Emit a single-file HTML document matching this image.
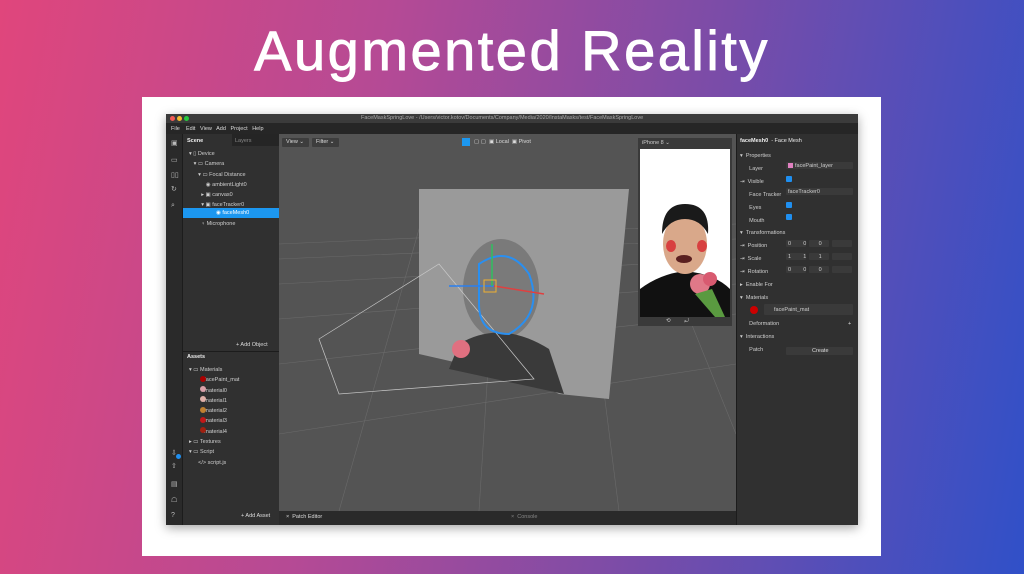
<!DOCTYPE html>
<html><head><meta charset="utf-8"><style>
*{margin:0;padding:0;box-sizing:border-box}
body{width:1024px;height:574px;overflow:hidden;position:relative;font-family:"Liberation Sans",sans-serif;
background:linear-gradient(100deg,#e0467c 0%,#b54a95 35%,#7a4ca8 65%,#4f4fbb 85%,#3050c8 100%);}
.ab{position:absolute}
h1{position:absolute;left:0;width:1024px;top:18px;text-align:center;color:#fff;font-weight:normal;font-size:56px;letter-spacing:2.5px;-webkit-text-stroke:0.9px #fff}
.t{position:absolute;font-size:5.5px;color:#cfcfcf;white-space:nowrap}
.in{position:absolute;height:7px;background:#3a3a3a;border-radius:1px}
.cb{position:absolute;width:6px;height:6px;background:#1f8ff0;border-radius:1px}
.ic{position:absolute;left:5px;font-size:7px;color:#bbb}
</style></head><body>
<h1>Augmented Reality</h1>
<div class="ab" style="left:142px;top:97px;width:739px;height:459px;background:#fff"></div>
<div class="ab" style="left:166px;top:114px;width:692px;height:411px;background:#2b2b2b;box-shadow:0 3px 10px rgba(0,0,0,.35);overflow:hidden">
 <div class="ab" style="left:0;top:0;width:692px;height:9px;background:#3b3b3b"></div>
 <div class="ab" style="left:4px;top:2px;width:5px;height:5px;border-radius:50%;background:#f25a55"></div>
 <div class="ab" style="left:11px;top:2px;width:5px;height:5px;border-radius:50%;background:#f4bb2f"></div>
 <div class="ab" style="left:18px;top:2px;width:5px;height:5px;border-radius:50%;background:#27c93f"></div>
 <div class="t" style="left:195px;top:1px;color:#aaa;font-size:5.5px">FaceMaskSpringLove - /Users/victor.kotov/Documents/Company/Media/2020/InstaMasks/test/FaceMaskSpringLove</div>
 <div class="ab" style="left:0;top:9px;width:692px;height:11px;background:#262626"></div>
 <div class="t" style="left:5px;top:12px;color:#ddd">File &nbsp;&nbsp; Edit &nbsp; View &nbsp; Add &nbsp; Project &nbsp; Help</div>
 <div class="ab" style="left:0;top:20px;width:17px;height:391px;background:#2a2a2a;border-right:1px solid #1c1c1c"></div>
 <div class="ic" style="top:25px">▣</div><div class="ic" style="top:42px">▭</div><div class="ic" style="top:57px">▯▯</div><div class="ic" style="top:71px">↻</div><div class="ic" style="top:88px">⌕</div>
 <div class="ic" style="top:335px">⇩</div><div class="ic" style="top:348px">⇧</div><div class="ic" style="top:366px">▤</div><div class="ic" style="top:382px">☖</div><div class="ic" style="top:398px">?</div>
 <div class="ab" style="left:10px;top:340px;width:5px;height:5px;border-radius:50%;background:#1f8ff0"></div>
 <div class="ab" style="left:17px;top:20px;width:96px;height:391px;background:#303030"></div>
 <div class="ab" style="left:66px;top:20px;width:48px;height:12px;background:#252525"></div>
 <div class="t" style="left:21px;top:24px;color:#eee;font-weight:bold">Scene</div>
 <div class="t" style="left:69px;top:24px;color:#888">Layers</div>
 <div class="t" style="left:23px;top:35px;line-height:10.3px">▾ ▯ Device<br>&nbsp;&nbsp;&nbsp;▾ ▭ Camera<br>&nbsp;&nbsp;&nbsp;&nbsp;&nbsp;&nbsp;▾ ▭ Focal Distance<br>&nbsp;&nbsp;&nbsp;&nbsp;&nbsp;&nbsp;&nbsp;&nbsp;&nbsp;&nbsp;&nbsp;◉ ambientLight0<br>&nbsp;&nbsp;&nbsp;&nbsp;&nbsp;&nbsp;&nbsp;&nbsp;▸ ▣ canvas0<br>&nbsp;&nbsp;&nbsp;&nbsp;&nbsp;&nbsp;&nbsp;&nbsp;▾ ▣ faceTracker0</div>
 <div class="ab" style="left:17px;top:94px;width:96px;height:10px;background:#1c97f0"></div>
 <div class="t" style="left:50px;top:96px;color:#fff">◉ faceMesh0</div>
 <div class="t" style="left:35px;top:107px">♀ Microphone</div>
 <div class="t" style="left:70px;top:228px;color:#ddd">+ Add Object</div>
 <div class="ab" style="left:17px;top:237px;width:96px;height:1px;background:#1c1c1c"></div>
 <div class="t" style="left:21px;top:240px;color:#eee;font-weight:bold">Assets</div>
 <div class="t" style="left:23px;top:251px;line-height:10.3px">▾ ▭ Materials<br>&nbsp;&nbsp;&nbsp;&nbsp;&nbsp;&nbsp;&nbsp;&nbsp;&nbsp;&nbsp;facePaint_mat<br>&nbsp;&nbsp;&nbsp;&nbsp;&nbsp;&nbsp;&nbsp;&nbsp;&nbsp;&nbsp;material0<br>&nbsp;&nbsp;&nbsp;&nbsp;&nbsp;&nbsp;&nbsp;&nbsp;&nbsp;&nbsp;material1<br>&nbsp;&nbsp;&nbsp;&nbsp;&nbsp;&nbsp;&nbsp;&nbsp;&nbsp;&nbsp;material2<br>&nbsp;&nbsp;&nbsp;&nbsp;&nbsp;&nbsp;&nbsp;&nbsp;&nbsp;&nbsp;material3<br>&nbsp;&nbsp;&nbsp;&nbsp;&nbsp;&nbsp;&nbsp;&nbsp;&nbsp;&nbsp;material4<br>▸ ▭ Textures<br>▾ ▭ Script<br>&nbsp;&nbsp;&nbsp;&nbsp;&nbsp;&nbsp;&lt;/&gt; script.js</div>
 <div class="ab" style="left:34px;top:262px;width:6px;height:6px;border-radius:50%;background:#a00;box-shadow:0 10px 0 #d9a0a8,0 20px 0 #e0b0a8,0 31px 0 #c08030,0 41px 0 #c01818,0 51px 0 #a02010"></div>
 <div class="t" style="left:75px;top:399px;color:#ddd">+ Add Asset</div>
 <div class="ab" style="left:113px;top:20px;width:457px;height:377px;background:#545454;overflow:hidden">
  <svg width="457" height="377" style="position:absolute;left:0;top:0">
   <g stroke="#6a6a6a" stroke-width=".6" fill="none">
    <path d="M0 110 L457 90 M0 125 L457 105 M0 150 L457 125 M0 185 L457 150 M0 230 L457 180 M0 300 L457 230 M60 377 L150 60 M200 377 L220 60 M340 377 L300 60 M457 300 L360 60"/>
   </g>
   <polygon points="140,55 350,55 330,265 280,260 250,245 140,220" fill="#9a9a9a"/>
   <ellipse cx="222" cy="155" rx="38" ry="50" fill="#7a7a7a"/>
   <path d="M180 210 Q222 185 270 215 L285 260 L170 235Z" fill="#3a3a3a"/>
   <g stroke="#c8c8c8" stroke-width=".7" fill="none"><path d="M40 205 L160 130 L255 245 L60 260 Z M40 205 L60 260"/></g>
   <path d="M200 130 Q230 110 250 140 Q265 180 230 200 Q200 200 200 170Z" stroke="#2a8ff0" stroke-width="2" fill="none"/>
   <line x1="170" y1="152" x2="215" y2="152" stroke="#2a7ff0" stroke-width="1.5"/>
   <line x1="215" y1="152" x2="265" y2="160" stroke="#e04040" stroke-width="1.5"/>
   <line x1="213" y1="110" x2="213" y2="152" stroke="#30c060" stroke-width="1.5"/>
   <rect x="205" y="146" width="12" height="12" fill="none" stroke="#f0b030"/>
   <circle cx="182" cy="215" r="9" fill="#e07080"/>
  </svg>
  <div class="in" style="left:3px;top:4px;width:27px;height:9px;background:#3d3d3d"></div><div class="t" style="left:7px;top:5px;color:#ddd">View ⌄</div>
  <div class="in" style="left:33px;top:4px;width:27px;height:9px;background:#3d3d3d"></div><div class="t" style="left:37px;top:5px;color:#ddd">Filter ⌄</div>
  <div class="ab" style="left:183px;top:4px;width:8px;height:8px;background:#1c97f0"></div>
  <div class="t" style="left:195px;top:5px;color:#ddd">▢ ▢ &nbsp;▣ Local &nbsp;▣ Pivot</div>
 </div>
 <div class="ab" style="left:113px;top:397px;width:457px;height:14px;background:#2a2a2a"></div>
 <div class="t" style="left:120px;top:400px;color:#ddd">× &nbsp;Patch Editor</div>
 <div class="t" style="left:345px;top:400px;color:#888">× &nbsp;Console</div>
 <div class="ab" style="left:472px;top:24px;width:94px;height:188px;background:#3a3a3a"></div>
 <div class="t" style="left:476px;top:26px;color:#ccc">iPhone 8 ⌄</div>
 <div class="ab" style="left:474px;top:35px;width:90px;height:168px;background:#fff;overflow:hidden">
  <svg width="90" height="168"><path d="M0 168 L0 140 Q20 125 45 122 Q75 125 90 140 L90 168Z" fill="#111"/>
  <ellipse cx="45" cy="95" rx="22" ry="30" fill="#d9a88a"/><path d="M22 85 Q22 55 45 55 Q70 55 68 85 Q60 70 45 70 Q30 70 22 85Z" fill="#1a1a1a"/>
  <ellipse cx="31" cy="97" rx="5" ry="6" fill="#d84040"/><ellipse cx="62" cy="97" rx="5" ry="6" fill="#d84040"/>
  <ellipse cx="44" cy="110" rx="8" ry="4" fill="#5a2020"/>
  <circle cx="60" cy="135" r="10" fill="#e07888"/><circle cx="70" cy="130" r="7" fill="#d85a70"/><path d="M55 145 L75 168 L85 168 L72 140Z" fill="#5a9a40"/></svg>
 </div>
 <div class="t" style="left:500px;top:204px;color:#ccc">⟲ &nbsp;&nbsp;&nbsp;&nbsp;&nbsp;&nbsp;&nbsp;&nbsp;⤾</div>
 <div class="ab" style="left:570px;top:20px;width:122px;height:391px;background:#303030;border-left:1px solid #1c1c1c"></div>
 <div class="t" style="left:574px;top:24px;color:#eee"><b>faceMesh0</b> &nbsp;- Face Mesh</div>
 <div class="t" style="left:574px;top:36px;line-height:12.9px">▾ &nbsp;Properties<br>&nbsp;&nbsp;&nbsp;&nbsp;&nbsp;&nbsp;Layer<br>⇥ &nbsp;Visible<br>&nbsp;&nbsp;&nbsp;&nbsp;&nbsp;&nbsp;Face Tracker<br>&nbsp;&nbsp;&nbsp;&nbsp;&nbsp;&nbsp;Eyes<br>&nbsp;&nbsp;&nbsp;&nbsp;&nbsp;&nbsp;Mouth<br>▾ &nbsp;Transformations<br>⇥ &nbsp;Position<br>⇥ &nbsp;Scale<br>⇥ &nbsp;Rotation<br>▸ &nbsp;Enable For<br>▾ &nbsp;Materials<br><br>&nbsp;&nbsp;&nbsp;&nbsp;&nbsp;&nbsp;Deformation<br>▾ &nbsp;Interactions<br>&nbsp;&nbsp;&nbsp;&nbsp;&nbsp;&nbsp;Patch</div>
 <div class="in" style="left:620px;top:48px;width:67px"></div><div class="ab" style="left:622px;top:49px;width:5px;height:5px;background:#e080c0"></div><div class="t" style="left:629px;top:49px">facePaint_layer</div>
 <div class="cb" style="left:620px;top:62px"></div>
 <div class="in" style="left:620px;top:74px;width:67px"></div><div class="t" style="left:622px;top:75px">faceTracker0</div>
 <div class="cb" style="left:620px;top:88px"></div><div class="cb" style="left:620px;top:100px"></div>
 <div class="in" style="left:620px;top:126px;width:20px;box-shadow:23px 0 0 #3a3a3a,46px 0 0 #3a3a3a"></div><div class="t" style="left:622px;top:127px">0 &nbsp;&nbsp;&nbsp;&nbsp;&nbsp;&nbsp;&nbsp;0 &nbsp;&nbsp;&nbsp;&nbsp;&nbsp;&nbsp;&nbsp;0</div>
 <div class="in" style="left:620px;top:139px;width:20px;box-shadow:23px 0 0 #3a3a3a,46px 0 0 #3a3a3a"></div><div class="t" style="left:622px;top:140px">1 &nbsp;&nbsp;&nbsp;&nbsp;&nbsp;&nbsp;&nbsp;1 &nbsp;&nbsp;&nbsp;&nbsp;&nbsp;&nbsp;&nbsp;1</div>
 <div class="in" style="left:620px;top:152px;width:20px;box-shadow:23px 0 0 #3a3a3a,46px 0 0 #3a3a3a"></div><div class="t" style="left:622px;top:153px">0 &nbsp;&nbsp;&nbsp;&nbsp;&nbsp;&nbsp;&nbsp;0 &nbsp;&nbsp;&nbsp;&nbsp;&nbsp;&nbsp;&nbsp;0</div>
 <div class="in" style="left:598px;top:190px;width:89px;height:11px"></div>
 <div class="ab" style="left:584px;top:192px;width:8px;height:8px;border-radius:50%;background:#c00"></div>
 <div class="t" style="left:608px;top:193px">facePaint_mat</div>
 <div class="t" style="left:682px;top:207px;color:#ddd">+</div>
 <div class="in" style="left:620px;top:233px;width:67px;height:8px"></div><div class="t" style="left:646px;top:234px;color:#ddd">Create</div>
</div>
</body></html>
